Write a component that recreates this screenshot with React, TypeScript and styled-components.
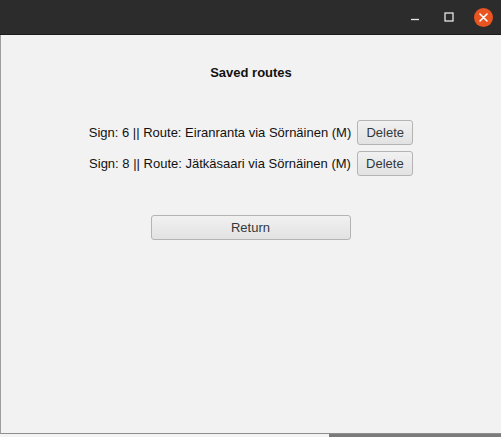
import React from "react";
import styled, { createGlobalStyle } from "styled-components";

const Global = createGlobalStyle`
  html, body { margin: 0; padding: 0; background: #ffffff; }
  body { width: 501px; height: 437px; overflow: hidden; font-family: "Liberation Sans", Arial, sans-serif; }
`;

const Screen = styled.div`
  width: 501px;
  height: 437px;
  display: flex;
  flex-direction: column;
`;

const TitleBar = styled.div`
  height: 34px;
  flex: 0 0 34px;
  background: #2c2c2c;
  border-bottom: 1px solid #1b1b1b;
  display: flex;
  align-items: center;
  justify-content: flex-end;
  padding-right: 1px;
`;

const WinBtn = styled.div`
  width: 34px;
  height: 34px;
  display: flex;
  align-items: center;
  justify-content: center;
`;

const CloseCircle = styled.div`
  width: 19px;
  height: 19px;
  border-radius: 50%;
  background: #e95420;
  display: flex;
  align-items: center;
  justify-content: center;
`;

const Window = styled.div`
  flex: 0 0 399px;
  background: #f2f2f2;
  border-left: 1px solid #9d9d9d;
  border-bottom: 1px solid #8e8e8e;
  display: flex;
  flex-direction: column;
  align-items: center;
  padding-top: 30px;
  box-sizing: border-box;
`;

const Title = styled.div`
  font-weight: bold;
  font-size: 13px;
  line-height: 16px;
  color: #111;
`;

const List = styled.div`
  margin-top: 39px;
  display: flex;
  flex-direction: column;
  gap: 6px;
  align-items: center;
`;

const Row = styled.div`
  display: flex;
  align-items: center;
  gap: 6px;
`;

const RouteText = styled.span`
  font-size: 13px;
  color: #111;
`;

const Button = styled.button<{ $w: number }>`
  width: ${(p) => p.$w}px;
  height: 25px;
  box-sizing: border-box;
  border: 1px solid #b4b4b4;
  border-radius: 3px;
  background: linear-gradient(#f1f1f1, #e2e2e2);
  font-family: "Liberation Sans", Arial, sans-serif;
  font-size: 13px;
  color: #33393b;
  padding: 0;
  display: flex;
  align-items: center;
  justify-content: center;
`;

const ReturnWrap = styled.div`
  margin-top: 39px;
  margin-right: 1px;
`;

const Strip = styled.div`
  flex: 1;
  display: flex;
`;

const StripPart = styled.div<{ $bg: string; $w?: number }>`
  background: ${(p) => p.$bg};
  ${(p) => (p.$w ? `width: ${p.$w}px;` : "flex: 1;")}
`;

export default function App() {
  const routes = [
    "Sign: 6 || Route: Eiranranta via Sörnäinen (M)",
    "Sign: 8 || Route: Jätkäsaari via Sörnäinen (M)",
  ];
  return (
    <Screen>
      <Global />
      <TitleBar>
        <WinBtn>
          <svg width="10" height="10" viewBox="0 0 10 10">
            <line x1="1" y1="7.5" x2="9" y2="7.5" stroke="#e6e6e6" strokeWidth="1.3" />
          </svg>
        </WinBtn>
        <WinBtn>
          <svg width="10" height="10" viewBox="0 0 10 10">
            <rect x="1" y="1" width="8" height="8" fill="none" stroke="#e6e6e6" strokeWidth="1.3" />
          </svg>
        </WinBtn>
        <WinBtn>
          <CloseCircle>
            <svg width="9" height="9" viewBox="0 0 9 9">
              <path d="M1 1 L8 8 M8 1 L1 8" stroke="#fff" strokeWidth="1.6" strokeLinecap="round" />
            </svg>
          </CloseCircle>
        </WinBtn>
      </TitleBar>
      <Window>
        <Title>Saved routes</Title>
        <List>
          {routes.map((r) => (
            <Row key={r}>
              <RouteText>{r}</RouteText>
              <Button $w={56}>Delete</Button>
            </Row>
          ))}
        </List>
        <ReturnWrap>
          <Button $w={200}>Return</Button>
        </ReturnWrap>
      </Window>
      <Strip>
        <StripPart $bg="#f4f4f4" $w={329} />
        <StripPart $bg="#7a7a7a" />
      </Strip>
    </Screen>
  );
}
